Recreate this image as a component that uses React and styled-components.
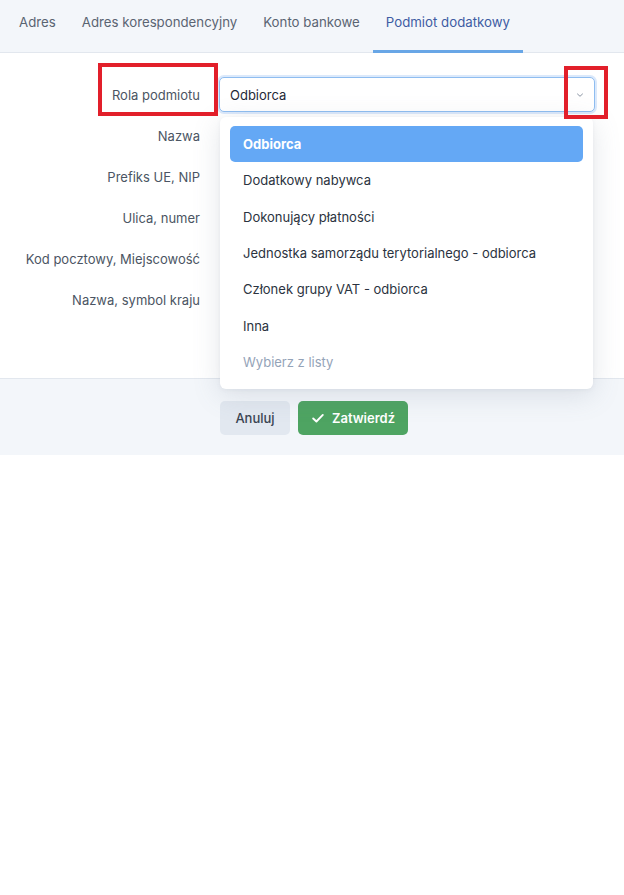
import React from "react";
import styled, { createGlobalStyle } from "styled-components";

const Global = createGlobalStyle`
  html, body { margin: 0; padding: 0; background: #ffffff; }
  body { font-family: Inter, "Noto Sans", "Liberation Sans", sans-serif; -webkit-font-smoothing: antialiased; }
  * { box-sizing: border-box; }
`;

const Page = styled.div`
  position: relative;
  width: 624px;
`;

const TabBar = styled.div`
  display: flex;
  height: 53px;
  padding-left: 6px;
  background: #f3f6fa;
  border-bottom: 1px solid #e2e7ee;
`;

const Tab = styled.div`
  padding: 13px 13px 0;
  height: 53px;
  font-size: 13.25px;
  line-height: 18px;
  color: ${(p) => (p.$active ? "#3e5ca3" : "#5a6472")};
  border-bottom: 3px solid ${(p) => (p.$active ? "#68a6e6" : "transparent")};
  margin-bottom: -1px;
  white-space: nowrap;
`;

const Form = styled.div`
  position: relative;
  display: grid;
  grid-template-columns: 200px 1fr;
  column-gap: 19px;
  row-gap: 6px;
  padding: 24px 29px 61px 0;
`;

const Label = styled.div`
  height: 35px;
  display: flex;
  align-items: center;
  justify-content: flex-end;
  font-size: 13px;
  color: #4b5563;
  white-space: nowrap;
`;

const Cell = styled.div`
  position: relative;
  height: 35px;
`;

const Select = styled.div`
  height: 35px;
  display: flex;
  align-items: center;
  justify-content: space-between;
  padding: 0 10px;
  border: 1px solid #8fbdf0;
  border-radius: 5px;
  box-shadow: 0 0 0 2px #dbe9fb;
  background: #fff;
  font-size: 13px;
  color: #1f2937;
`;

const Menu = styled.div`
  position: absolute;
  top: 40px;
  left: 1px;
  right: 2px;
  padding: 9px 10px;
  background: #fff;
  border-radius: 6px;
  box-shadow: 0 6px 28px rgba(100, 116, 139, 0.18), 0 1px 4px rgba(100, 116, 139, 0.08);
  z-index: 5;
`;

const Item = styled.div`
  height: 36.3px;
  display: flex;
  align-items: center;
  padding-left: 13px;
  font-size: 13px;
  border-radius: 5px;
  background: ${(p) => (p.$selected ? "#64a8f5" : "transparent")};
  color: ${(p) => (p.$selected ? "#ffffff" : p.$placeholder ? "#94a3b8" : "#2b3340")};
  font-weight: ${(p) => (p.$selected ? 700 : 400)};
`;

const Footer = styled.div`
  height: 77px;
  background: #f3f6fa;
  border-top: 1px solid #e2e7ee;
  display: flex;
  gap: 8px;
  align-items: flex-start;
  padding: 22px 0 0 220px;
`;

const Button = styled.button`
  height: 34px;
  border: none;
  border-radius: 5px;
  font-family: inherit;
  font-size: 13px;
  display: flex;
  align-items: center;
  justify-content: center;
  gap: 7px;
  padding: 0;
  width: ${(p) => (p.$primary ? "110px" : "70px")};
  background: ${(p) => (p.$primary ? "#4ea462" : "#e2e8f0")};
  color: ${(p) => (p.$primary ? "#ffffff" : "#3b4553")};
  font-weight: ${(p) => (p.$primary ? 600 : 500)};
`;

const Highlight = styled.div`
  position: absolute;
  border: 4px solid #e21f2a;
  z-index: 10;
  pointer-events: none;
`;

const Caret = styled.div`
  position: absolute;
  left: 252px;
  top: 455px;
  width: 1px;
  height: 3px;
  background: #333;
`;

const Chevron = () => (
  <svg width="8" height="8" viewBox="0 0 8 8" fill="none">
    <path d="M1.5 3 L4 5.3 L6.5 3" stroke="#8a94a3" strokeWidth="1" strokeLinecap="round" strokeLinejoin="round" />
  </svg>
);

const Check = () => (
  <svg width="14" height="14" viewBox="0 0 16 16" fill="none">
    <path d="M2.5 8.5 L6.2 12 L13.5 4.5" stroke="#fff" strokeWidth="2.2" strokeLinecap="round" strokeLinejoin="round" />
  </svg>
);

const tabs = ["Adres", "Adres korespondencyjny", "Konto bankowe", "Podmiot dodatkowy"];
const labels = ["Nazwa", "Prefiks UE, NIP", "Ulica, numer", "Kod pocztowy, Miejscowość", "Nazwa, symbol kraju"];
const options = [
  "Odbiorca",
  "Dodatkowy nabywca",
  "Dokonujący płatności",
  "Jednostka samorządu terytorialnego - odbiorca",
  "Członek grupy VAT - odbiorca",
  "Inna",
];

export default function App() {
  return (
    <Page>
      <Global />
      <TabBar>
        {tabs.map((t, i) => (
          <Tab key={t} $active={i === 3}>{t}</Tab>
        ))}
      </TabBar>
      <Form>
        <Label>Rola podmiotu</Label>
        <Cell>
          <Select>
            <span>Odbiorca</span>
            <Chevron />
          </Select>
          <Menu>
            {options.map((o, i) => (
              <Item key={o} $selected={i === 0}>{o}</Item>
            ))}
            <Item $placeholder>Wybierz z listy</Item>
          </Menu>
        </Cell>
        {labels.map((l) => (
          <React.Fragment key={l}>
            <Label>{l}</Label>
            <Cell />
          </React.Fragment>
        ))}
      </Form>
      <Footer>
        <Button>Anuluj</Button>
        <Button $primary>
          <Check />
          Zatwierdź
        </Button>
      </Footer>
      <Caret />
      <Highlight style={{ left: 98, top: 63, width: 120, height: 53 }} />
      <Highlight style={{ left: 564, top: 66, width: 44, height: 53 }} />
    </Page>
  );
}
